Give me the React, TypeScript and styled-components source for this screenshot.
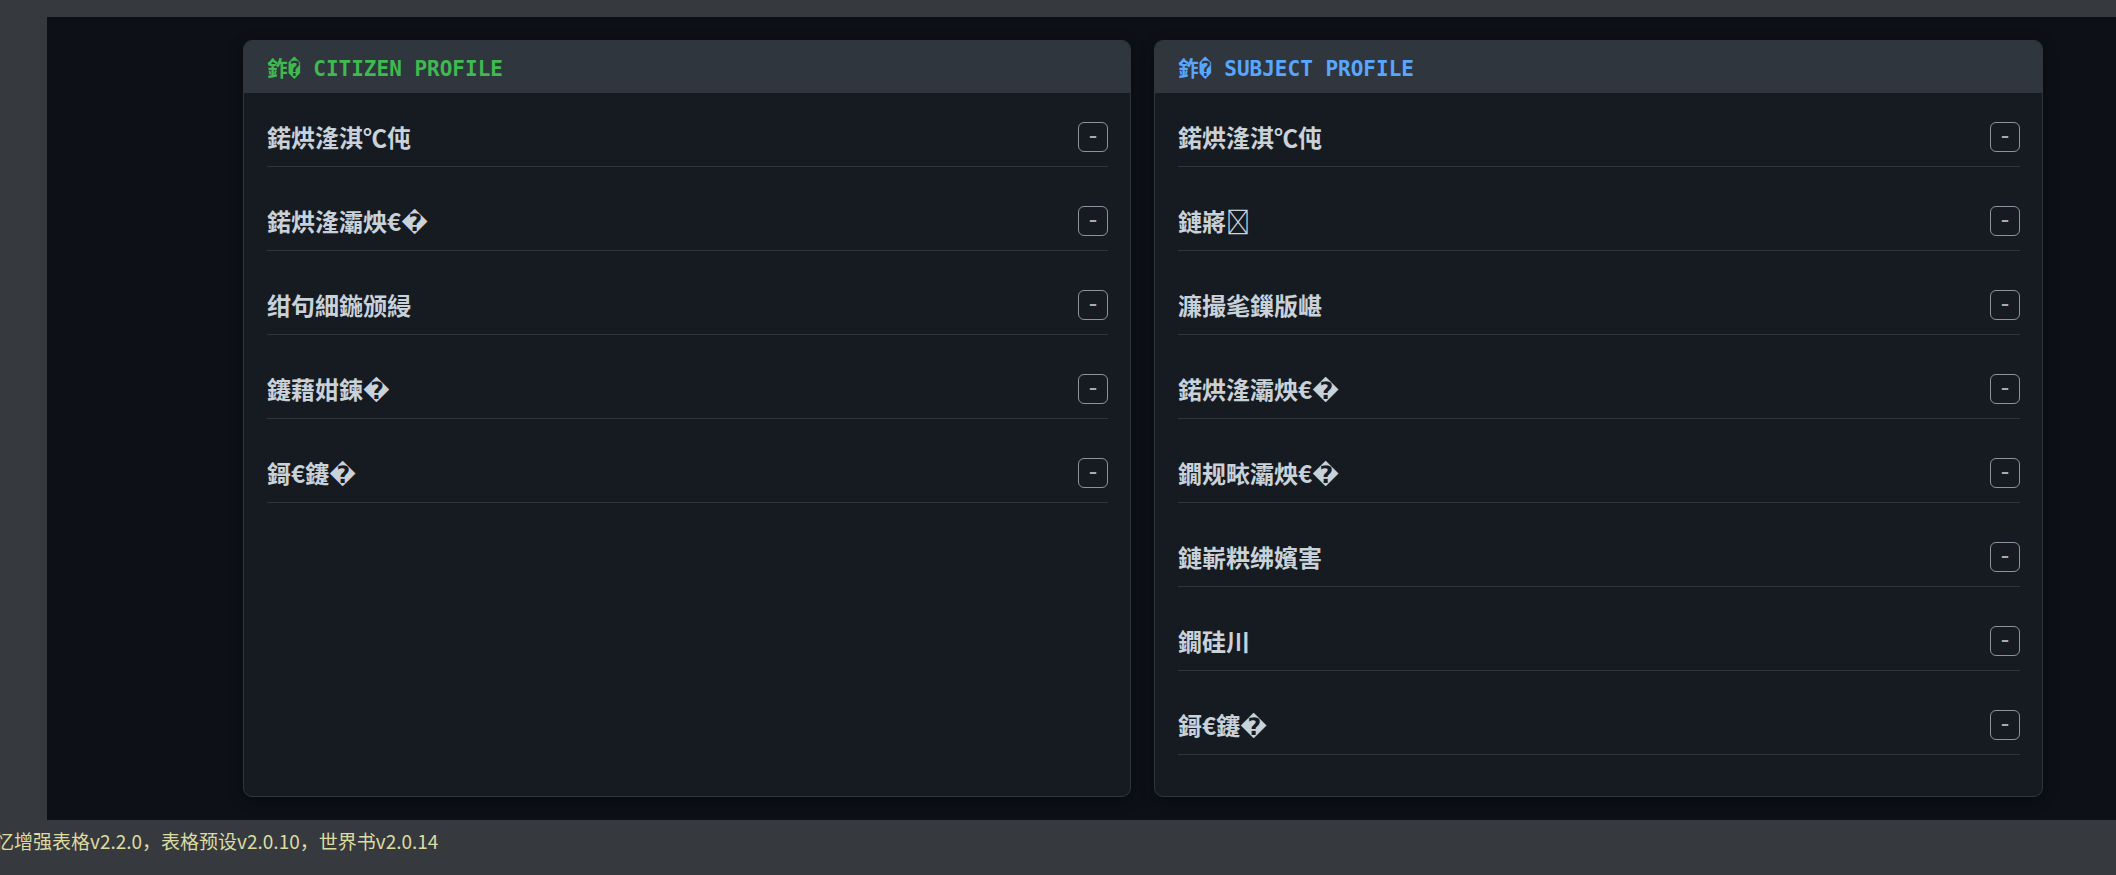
import React from 'react';
import styled, { createGlobalStyle } from 'styled-components';

const GlobalStyle = createGlobalStyle`
  html, body {
    margin: 0;
    padding: 0;
    background: #36393e;
    overflow: hidden;
  }
  * {
    box-sizing: border-box;
  }
`;

const Screen = styled.div`
  width: 100vw;
  height: 100vh;
  display: flex;
  flex-direction: column;
`;

const Stage = styled.main`
  margin: 17px 0 0 47px;
  padding: 23px 0 23px 196px;
  background: #0d1117;
  display: flex;
`;

const ProfileGrid = styled.div`
  display: grid;
  grid-template-columns: 888px 889px;
  gap: 23px;
  align-items: stretch;
`;

const Card = styled.section`
  background: #161b22;
  border: 1px solid #30363d;
  border-radius: 9px;
  overflow: hidden;
  box-shadow: 0 4px 14px rgba(0, 0, 0, 0.45);
  display: flex;
  flex-direction: column;
`;

const CardHeader = styled.header<{ $accent: string }>`
  height: 52px;
  padding: 0 23px;
  display: flex;
  align-items: center;
  background: #30363d;
  color: ${({ $accent }) => $accent};
  font-family: 'DejaVu Sans Mono', 'Liberation Mono', 'Noto Sans CJK SC', monospace;
  font-size: 21px;
  font-weight: 700;
  white-space: pre;
`;

const CardBody = styled.div`
  padding: 15px 22px 16px 23px;
  display: flex;
  flex-direction: column;
`;

const FieldRow = styled.div`
  display: flex;
  align-items: center;
  justify-content: space-between;
  padding: 14px 0;
  margin-bottom: 25px;
  border-bottom: 1px solid #30363d;
`;

const FieldLabel = styled.span`
  color: #c9d1d9;
  font-family: 'Noto Sans CJK SC', 'DejaVu Sans', sans-serif;
  font-size: 24px;
  font-weight: 700;
  line-height: 30px;
`;

const CollapseButton = styled.button`
  width: 30px;
  height: 30px;
  padding: 0 0 2px;
  display: flex;
  align-items: center;
  justify-content: center;
  background: transparent;
  border: 1px solid #8b949e;
  border-radius: 6px;
  color: #a3acb8;
  font-family: 'DejaVu Sans', sans-serif;
  font-size: 16px;
  font-weight: 700;
  line-height: 1;
  cursor: pointer;
`;

const Footer = styled.footer`
  flex: 1;
  display: flex;
  align-items: flex-start;
  padding-top: 7px;
  overflow: hidden;
  white-space: nowrap;
`;

const VersionLine = styled.span`
  margin-left: -24px;
  color: #dcdca0;
  font-family: 'Noto Sans CJK SC', 'Liberation Sans', sans-serif;
  font-size: 19px;
  line-height: 28px;
`;

type Profile = {
  title: string;
  accent: string;
  fields: string[];
};

const profiles: Profile[] = [
  {
    title: '鈼\uFFFD CITIZEN PROFILE',
    accent: '#3fb950',
    fields: ['鍩烘湰淇℃伅', '鍩烘湰灞炴€\uFFFD', '绀句細鍦颁綅', '鑳藉姏鍊\uFFFD', '鎶€鑳\uFFFD'],
  },
  {
    title: '鈼\uFFFD SUBJECT PROFILE',
    accent: '#58a6ff',
    fields: [
      '鍩烘湰淇℃伅',
      '鏈嶈\uE5CA',
      '濂撮毟鏁版嵁',
      '鍩烘湰灞炴€\uFFFD',
      '鐗规畩灞炴€\uFFFD',
      '鏈嶄粠绋嬪害',
      '鐗硅川',
      '鎶€鑳\uFFFD',
    ],
  },
];

const ProfileCard = ({ profile }: { profile: Profile }) => (
  <Card>
    <CardHeader $accent={profile.accent}>{profile.title}</CardHeader>
    <CardBody>
      {profile.fields.map((field, i) => (
        <FieldRow key={i}>
          <FieldLabel>{field}</FieldLabel>
          <CollapseButton type="button">–</CollapseButton>
        </FieldRow>
      ))}
    </CardBody>
  </Card>
);

const App = () => (
  <Screen>
    <GlobalStyle />
    <Stage>
      <ProfileGrid>
        {profiles.map((p) => (
          <ProfileCard key={p.title} profile={p} />
        ))}
      </ProfileGrid>
    </Stage>
    <Footer>
      <VersionLine>记忆增强表格v2.2.0，表格预设v2.0.10，世界书v2.0.14</VersionLine>
    </Footer>
  </Screen>
);

export default App;
